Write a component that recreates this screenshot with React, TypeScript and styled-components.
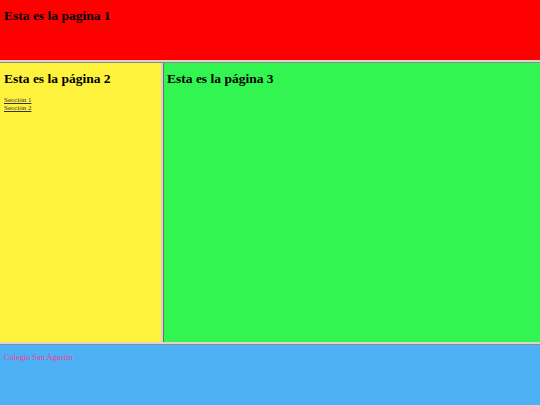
import React from "react";
import styled, { createGlobalStyle } from "styled-components";

const GlobalStyle = createGlobalStyle`
  html, body {
    margin: 0;
    padding: 0;
    height: 100%;
  }
  body {
    font-family: "Liberation Serif", "Times New Roman", serif;
  }
  #root {
    height: 100%;
  }
`;

const Frameset = styled.div`
  display: grid;
  grid-template-rows: 60px 3px 279px 3px 1fr;
  height: 405px;
  width: 540px;
  overflow: hidden;
`;

const Middle = styled.div`
  display: grid;
  grid-template-columns: 161px 3px 1fr;
`;

interface FrameProps {
  readonly bg: string;
  readonly padLeft?: string;
}

const Frame = styled.div<FrameProps>`
  background-color: ${(props) => props.bg};
  padding: 4px;
  padding-left: ${(props) => (props.padLeft ? props.padLeft : "4px")};
  overflow: hidden;
`;

const HDivider = styled.div`
  background-color: #d8d6cc;
  border-bottom: 1px solid #8c8c8c;
  box-sizing: border-box;
`;

const VDivider = styled.div`
  background-color: #d8d6cc;
  border-right: 1px solid #6e6e6e;
  box-sizing: border-box;
`;

const Title = styled.h2`
  margin: 4px 0 0;
  font-size: 13.5px;
  line-height: 16px;
  font-weight: bold;
  color: #000;
`;

const Links = styled.div`
  display: flex;
  flex-direction: column;
  margin-top: 10px;

  a {
    font-size: 7px;
    color: #333;
    line-height: 7.5px;
  }
`;

const Footer = styled.p`
  margin: 4px 0 0;
  font-size: 8.3px;
  color: #e0449c;
`;

export default function App() {
  return (
    <>
      <GlobalStyle />
      <Frameset>
        <Frame bg="#ff0000">
          <Title>Esta es la pagina 1</Title>
        </Frame>
        <HDivider />
        <Middle>
          <Frame bg="#fff23c">
            <Title>Esta es la página 2</Title>
            <Links>
              <a href="#s1">Sección 1</a>
              <a href="#s2">Sección 2</a>
            </Links>
          </Frame>
          <VDivider />
          <Frame bg="#33f552" padLeft="3px">
            <Title>Esta es la página 3</Title>
          </Frame>
        </Middle>
        <HDivider />
        <Frame bg="#4eb1f5">
          <Footer>Colegio San Agustin</Footer>
        </Frame>
      </Frameset>
    </>
  );
}
